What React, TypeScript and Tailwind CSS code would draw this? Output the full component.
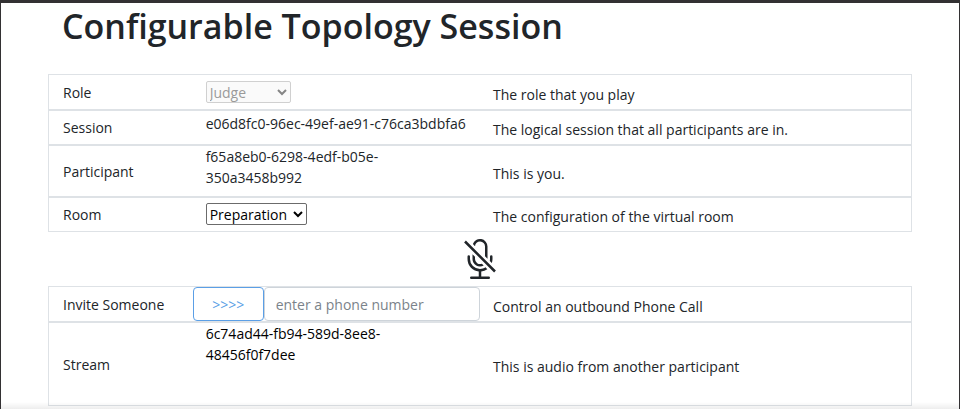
import type { ReactNode } from "react";
import { BsMicMute } from "react-icons/bs";

type RowProps = {
  label: string;
  htmlFor?: string;
  description: string;
  height: string;
  children: ReactNode;
};

function Row({ label, htmlFor, description, height, children }: RowProps) {
  return (
    <div className={`grid grid-cols-6 border border-[#dee2e6] ${height}`}>
      <div className="flex items-center pl-3.5">
        {htmlFor ? <label htmlFor={htmlFor}>{label}</label> : <span>{label}</span>}
      </div>
      <div className="col-span-2 flex">{children}</div>
      <div className="col-span-3 flex items-center pt-1 pl-[13px]">{description}</div>
    </div>
  );
}

function Chevron({ color }: { color: string }) {
  return (
    <svg
      viewBox="0 0 10 7"
      className={`pointer-events-none absolute top-2 right-1 h-[7px] w-2.5 ${color}`}
      fill="none"
      stroke="currentColor"
      strokeWidth="2"
      aria-hidden="true"
    >
      <path d="M1 1l4 4 4-4" />
    </svg>
  );
}

export default function App() {
  return (
    <div className="relative border-x border-t-3 border-[#333133] bg-white font-['Open_Sans','Noto_Sans',sans-serif] text-[14px] leading-[21px] text-[#212529]">
      <main className="px-[47px] pb-1">
        <h1 className="mb-6 pl-3.5 text-[34px] leading-[47px] font-semibold">
          Configurable Topology Session
        </h1>

        <section>
          <Row label="Role" htmlFor="role" description="The role that you play" height="min-h-9">
            <div className="relative mt-1.5 ml-[13px] h-[22px] w-[85px]">
              <select
                id="role"
                disabled
                className="size-full appearance-none rounded-xs border border-[#d0d0d0] bg-[#fafafa] pl-[3px] text-[#9a9a9a]"
              >
                <option>Judge</option>
              </select>
              <Chevron color="text-[#858585]" />
            </div>
          </Row>
          <Row
            label="Session"
            description="The logical session that all participants are in."
            height="min-h-[35px]"
          >
            <span className="pt-0.5 pl-[13px]">e06d8fc0-96ec-49ef-ae91-c76ca3bdbfa6</span>
          </Row>
          <Row label="Participant" description="This is you." height="min-h-[52px]">
            <span className="w-52 pl-[13px]">f65a8eb0-6298-4edf-b05e-350a3458b992</span>
          </Row>
          <Row
            label="Room"
            htmlFor="room"
            description="The configuration of the virtual room"
            height="min-h-[35px]"
          >
            <div className="relative mt-[5px] ml-[13px] h-[22px] w-[101px]">
              <select
                id="room"
                className="size-full appearance-none rounded-xs border border-[#6b6b6b] bg-white pl-[3px] text-black"
              >
                <option>Preparation</option>
              </select>
              <Chevron color="text-black" />
            </div>
          </Row>
        </section>

        <div className="flex justify-center py-[7px]">
          <button type="button" aria-label="Unmute microphone">
            <BsMicMute className="size-10" />
          </button>
        </div>

        <section>
          <Row
            label="Invite Someone"
            htmlFor="phone"
            description="Control an outbound Phone Call"
            height="min-h-9"
          >
            <button
              type="button"
              className="h-[34px] w-[71px] shrink-0 rounded-sm border border-[#5b9fe6] text-[#5b9fe6]"
            >
              &gt;&gt;&gt;&gt;
            </button>
            <input
              id="phone"
              type="tel"
              placeholder="enter a phone number"
              className="h-[34px] min-w-0 flex-1 rounded-sm border border-[#ced4da] px-[11px] placeholder:text-[#7b838a]"
            />
          </Row>
          <Row
            label="Stream"
            description="This is audio from another participant"
            height="min-h-[84px]"
          >
            <span className="w-52 pl-[13px] text-black">6c74ad44-fb94-589d-8ee8-48456f0f7dee</span>
          </Row>
        </section>
      </main>
      <div className="pointer-events-none absolute inset-x-0 bottom-0 h-2 bg-linear-to-t from-black/8 to-transparent" />
    </div>
  );
}
